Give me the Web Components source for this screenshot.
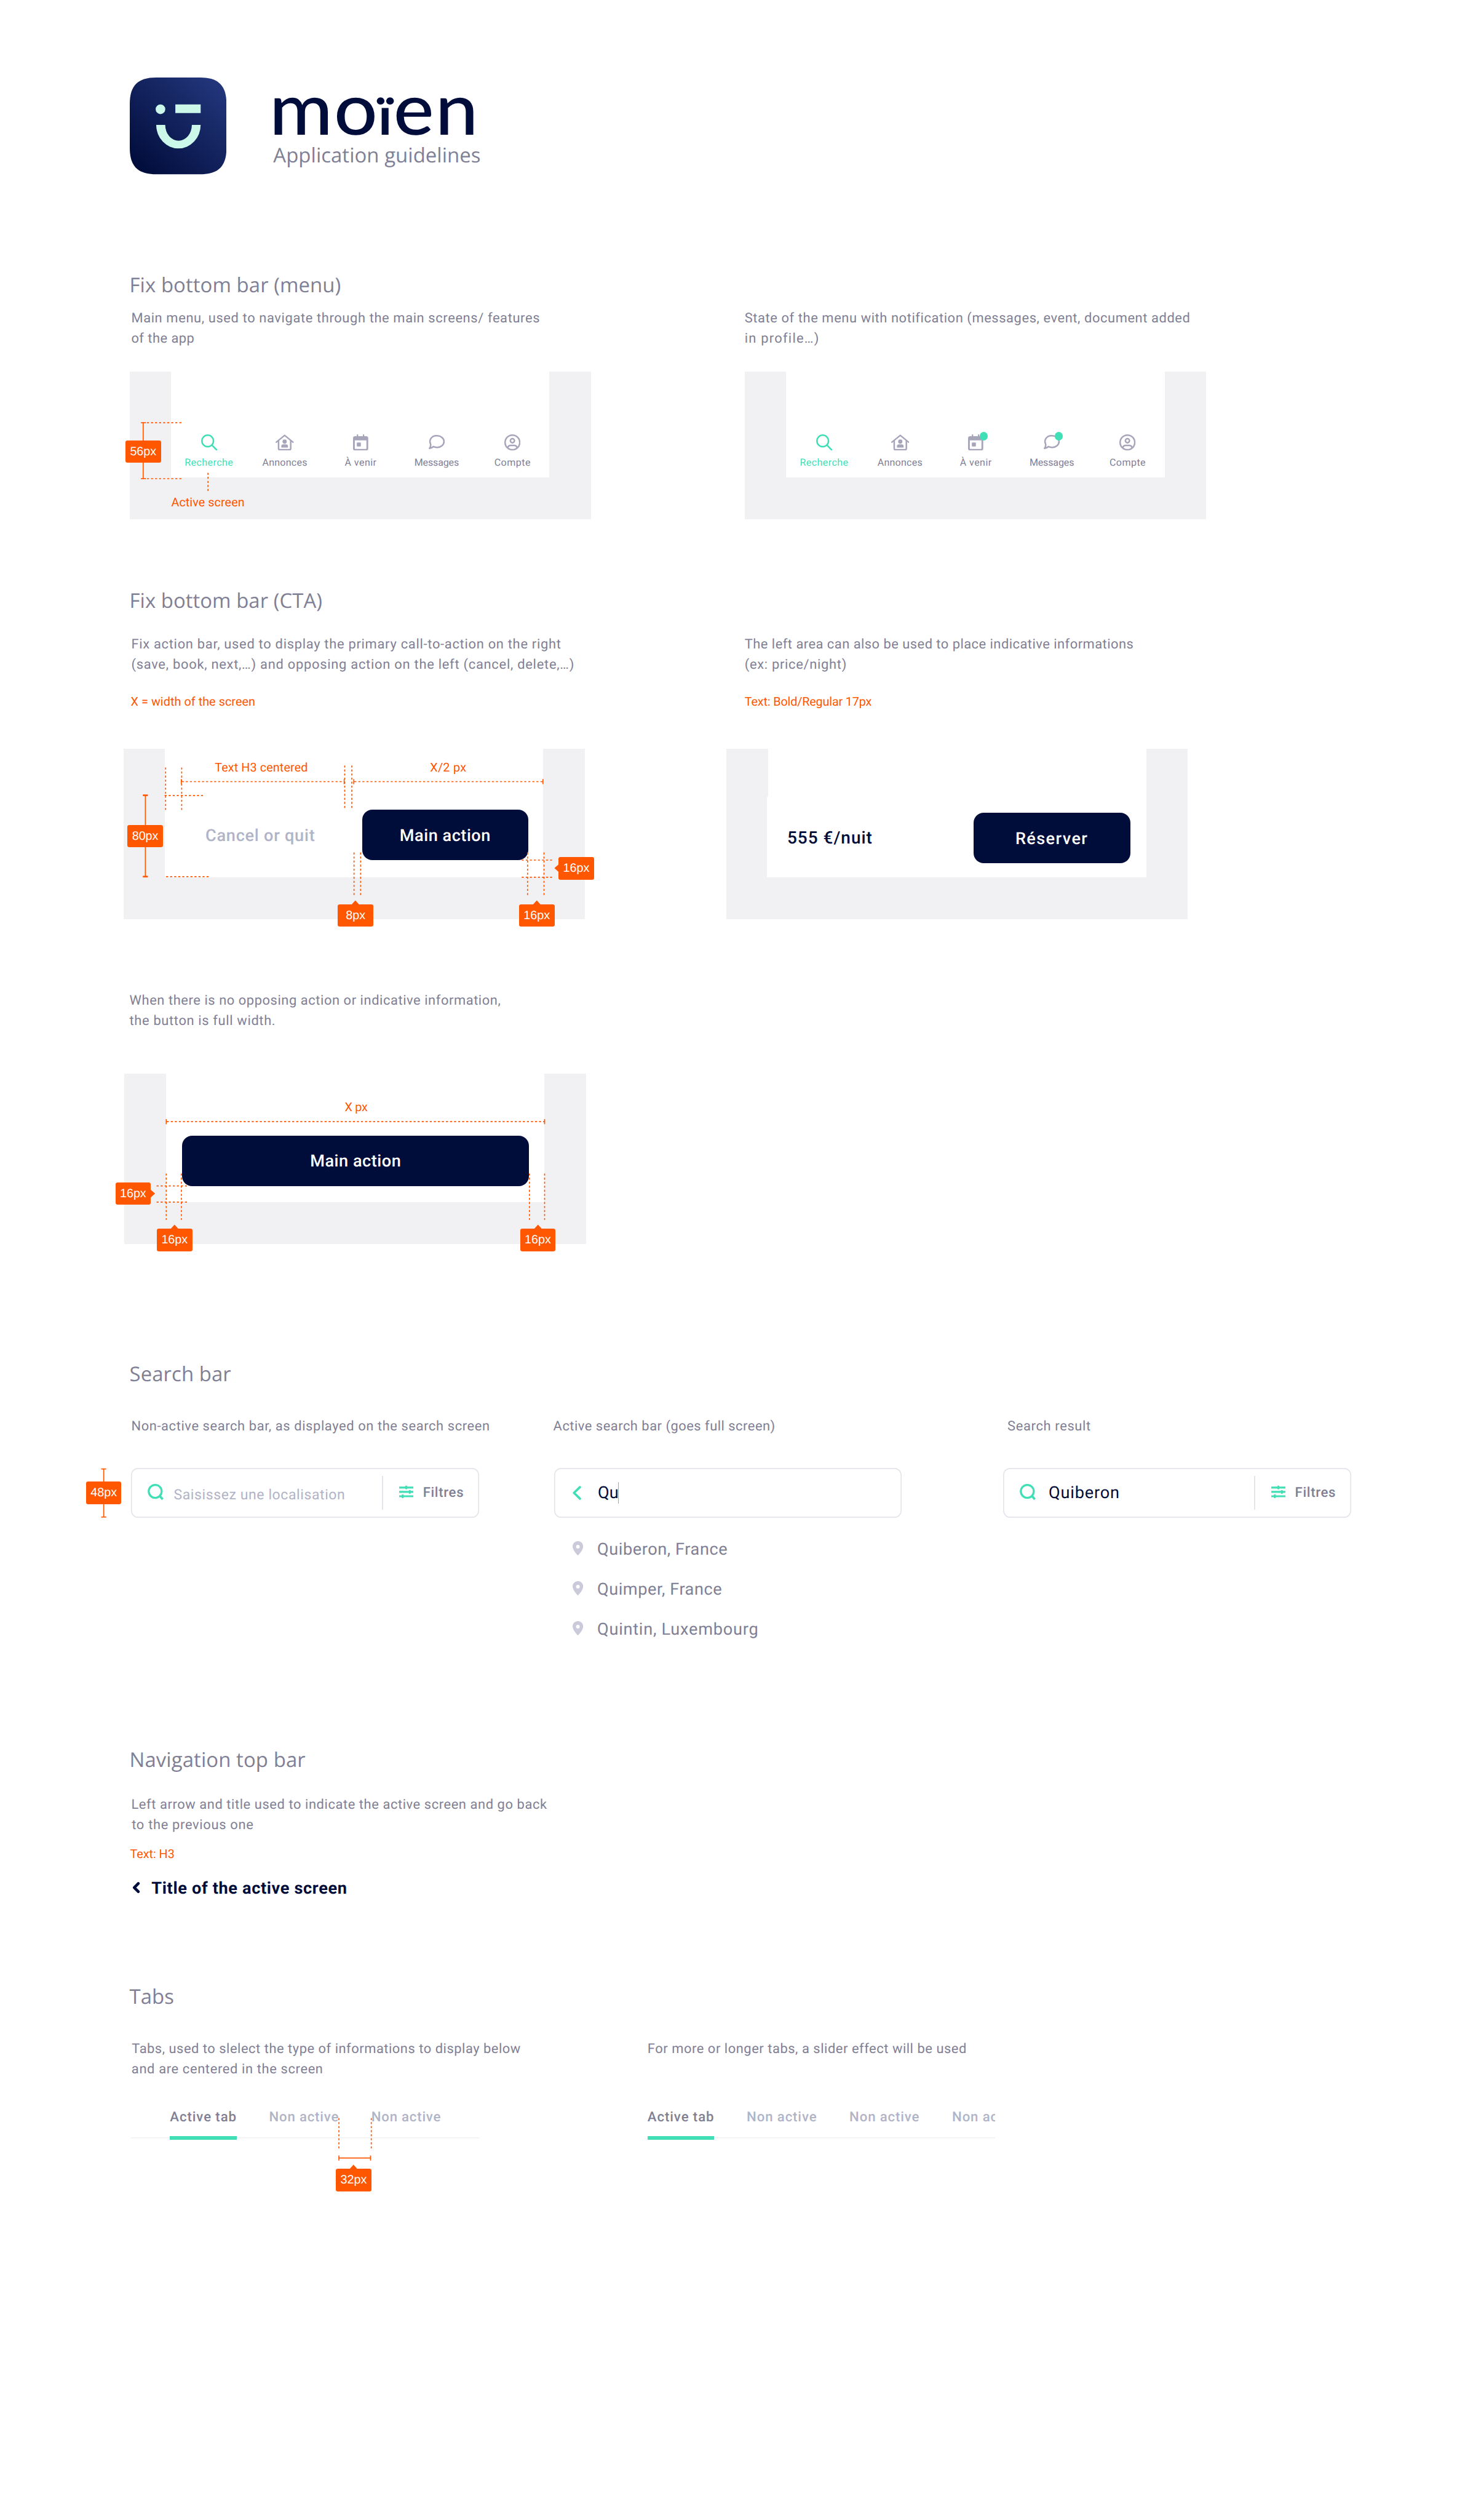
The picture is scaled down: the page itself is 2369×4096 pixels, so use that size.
<!DOCTYPE html>
<html lang="en">
<head>
<meta charset="utf-8">
<title>moïen – Application guidelines</title>
<style>
  /* 1rem = 100 design units */
  html { font-size: 82.257px; background: #fff; }
  body {
    margin: 0; width: 28.8rem; height: 49.79rem; overflow: hidden;
    font-family: Roboto, "Open Sans", sans-serif; color: #808095;
    text-rendering: geometricPrecision;
    --navy: #000c3a; --mint: #40dfb6; --orange: #ff5600; --grey: #808095;
    --pale: #b1b4c7; --panel: #f1f1f4; --line: #e4e4eb; --icon: #a6a5ba;
  }
  main { display: flex; flex-direction: column; align-items: flex-start; padding-left: 2.56rem; }
</style>
</head>
<body>
<main>
  <brand-header></brand-header>

  <guide-section label="Fix bottom bar (menu)" fit="418" style="margin-top:1.935rem">
    <guide-row style="margin-top:.223rem">
      <guide-col style="width:12.16rem">
        <ui-text class="in" w="808" style="margin-left:.035rem">Main menu, used to navigate through the main screens/ features</ui-text>
        <ui-text w="125" style="margin-left:.035rem">of the app</ui-text>
        <phone-frame h="292" screen="210" style="margin-top:.452rem">
          <menu-bar></menu-bar>
          <guide-lines slot="over" set="s26.5 100.5 26.5 211.5;s22 101 32 101;s22 211.5 32 211.5;d34 101 102 101;d34 211.5 102 211.5;d154.6 200 154.6 236"></guide-lines>
          <size-badge slot="over" x="-8" y="136">56px</size-badge>
          <ui-text slot="over" note w="145" style="position:absolute;left:.825rem;top:2.418rem">Active screen</ui-text>
        </phone-frame>
      </guide-col>
      <guide-col>
        <ui-text w="880">State of the menu with notification (messages, event, document added</ui-text>
        <ui-text w="147">in profile…)</ui-text>
        <phone-frame h="292" screen="210" style="margin-top:.452rem">
          <menu-bar notify></menu-bar>
        </phone-frame>
      </guide-col>
    </guide-row>
  </guide-section>

  <guide-section label="Fix bottom bar (CTA)" fit="381" style="margin-top:1.365rem">
    <guide-row style="margin-top:.427rem">
      <guide-col style="width:12.16rem">
        <ui-text w="850" style="margin-left:.035rem">Fix action bar, used to display the primary call-to-action on the right</ui-text>
        <ui-text w="876" style="margin-left:.035rem">(save, book, next,…) and opposing action on the left (cancel, delete,…)</ui-text>
        <ui-text note w="246" style="margin:.367rem 0 0 .025rem">X = width of the screen</ui-text>
        <phone-frame h="336" screen="254" style="margin:.782rem 0 0 -.12rem">
          <cta-bar style="padding:.26rem .3rem 0 .8rem">
            <ui-text w="217" size="33" lh="102" weight="500" style="color:var(--pale)">Cancel or quit</ui-text>
            <cta-button w="328" fit="180">Main action</cta-button>
          </cta-bar>
          <guide-lines slot="over" set="d83 37 83 121;d114.8 37 114.8 121;d437 33 437 117;d451 33 451 117;d115 65 435 65;s114 60 114 70;s436 60 436 70;d456 65 829 65;s455 60 455 70;s829 60 829 70;d81 92.5 158 92.5;d84 252.7 168 252.7;d455.5 205 455.5 289;d468.5 205 468.5 289;d798.5 205 798.5 289;d831 205 831 289;d787 220 848 220;d787 254 848 254;s43 92 43 253;t38 92 48 92;t38 252.7 48 252.7"></guide-lines>
          <size-badge slot="over" x="8" y="150">80px</size-badge>
          <size-badge slot="over" x="424" y="306.5" arrow="up">8px</size-badge>
          <size-badge slot="over" x="782" y="306.5" arrow="up">16px</size-badge>
          <size-badge slot="over" x="860" y="214" arrow="left">16px</size-badge>
          <ui-text slot="over" note w="184" style="position:absolute;left:1.805rem;top:.202rem">Text H3 centered</ui-text>
          <ui-text slot="over" note w="72" style="position:absolute;left:6.06rem;top:.202rem">X/2 px</ui-text>
        </phone-frame>
      </guide-col>
      <guide-col>
        <ui-text w="769">The left area can also be used to place indicative informations</ui-text>
        <ui-text w="202">(ex: price/night)</ui-text>
        <ui-text note w="251" style="margin-top:.367rem">Text: Bold/Regular 17px</ui-text>
        <phone-frame h="336" screen="254" style="margin:.782rem 0 0 -.36rem">
          <cta-bar style="padding:.32rem .32rem 0 .4rem;margin-left:-.02rem">
            <ui-text w="169" size="34" lh="97" weight="500" style="color:var(--navy)">555 €/nuit</ui-text>
            <cta-button w="310" fit="144">Réserver</cta-button>
          </cta-bar>
        </phone-frame>
      </guide-col>
    </guide-row>

    <guide-col style="margin-top:1.411rem">
      <ui-text w="734">When there is no opposing action or indicative information,</ui-text>
      <ui-text w="289">the button is full width.</ui-text>
      <phone-frame h="336" screen="254" style="margin:.849rem 0 0 -.1rem">
        <cta-bar style="padding:.28rem .3rem 0 .32rem">
          <cta-button w="686" fit="180" lh="98">Main action</cta-button>
        </cta-bar>
        <guide-lines slot="over" set="d84 95 831 95;s83 90 83 100;s831 90 831 100;d83 197.6 83 289;d113 197.6 113 289;d801 197.6 801 289;d831 197.6 831 289;d64 222 126 222;d64 254 126 254"></guide-lines>
        <size-badge slot="over" x="-18" y="214" arrow="right">16px</size-badge>
        <size-badge slot="over" x="64" y="306.3" arrow="up">16px</size-badge>
        <size-badge slot="over" x="782" y="306.3" arrow="up">16px</size-badge>
        <ui-text slot="over" note w="45" style="position:absolute;left:4.355rem;top:.495rem">X px</ui-text>
      </phone-frame>
    </guide-col>
  </guide-section>

  <guide-section label="Search bar" fit="201" style="margin-top:2.325rem">
    <guide-row style="margin-top:.602rem">
      <guide-col style="width:8.36rem">
        <ui-text w="709" style="margin-left:.035rem">Non-active search bar, as displayed on the search screen</ui-text>
        <search-field icon="lens" filters style="margin:.623rem 0 0 .03rem">
          <ui-text w="339" size="28" lh="92" style="color:var(--pale);margin:.04rem 0 0 .195rem">Saisissez une localisation</ui-text>
          <guide-lines slot="over" set="s-54 1 -54 97;s-59 2 -49 2;s-59 97 -49 97"></guide-lines>
          <size-badge slot="over" x="-89" y="27">48px</size-badge>
        </search-field>
      </guide-col>
      <guide-col style="width:8.98rem">
        <ui-text w="439" style="margin-left:.017rem">Active search bar (goes full screen)</ui-text>
        <search-field icon="back" style="margin:.623rem 0 0 .028rem">
          <ui-text w="41" size="33" lh="92" style="color:var(--navy);margin:.005rem 0 0 .325rem">Qu</ui-text>
          <text-caret></text-caret>
        </search-field>
        <place-list style="margin:.222rem 0 0 .4rem">
          <place-item fit="258">Quiberon, France</place-item>
          <place-item fit="247">Quimper, France</place-item>
          <place-item fit="319">Quintin, Luxembourg</place-item>
        </place-list>
      </guide-col>
      <guide-col>
        <ui-text w="165" style="margin-left:.015rem">Search result</ui-text>
        <search-field icon="lens" filters style="margin:.623rem 0 0 -.072rem">
          <ui-text w="141" size="33" lh="92" style="color:var(--navy);margin:.005rem 0 0 .25rem">Quiberon</ui-text>
        </search-field>
      </guide-col>
    </guide-row>
  </guide-section>

  <guide-section label="Navigation top bar" fit="348" style="margin-top:1.94rem">
    <guide-col style="margin-top:.466rem">
      <ui-text w="822" style="margin-left:.035rem">Left arrow and title used to indicate the active screen and go back</ui-text>
      <ui-text w="241" style="margin-left:.045rem">to the previous one</ui-text>
      <ui-text note w="88" style="margin:.207rem 0 0 .01rem">Text: H3</ui-text>
      <nav-title style="margin:.309rem 0 0 .06rem"><ui-text w="387" size="33" weight="700">Title of the active screen</ui-text></nav-title>
    </guide-col>
  </guide-section>

  <guide-section label="Tabs" fit="88" style="margin-top:1.701rem">
    <guide-row style="margin-top:.603rem">
      <guide-col style="width:10.24rem">
        <ui-text w="769" style="margin-left:.045rem">Tabs, used to slelect the type of informations to display below</ui-text>
        <ui-text w="379" style="margin-left:.04rem">and are centered in the screen</ui-text>
        <tab-strip style="margin:.58rem 0 0 .03rem;padding-left:.77rem;width:6.11rem">
          <tab-item active w="132">Active tab</tab-item>
          <tab-item w="138">Non active</tab-item>
          <tab-item w="138">Non active</tab-item>
          <guide-lines slot="over" set="d411 19 411 80;d475 19 475 80;s410 98 474 98;s411 93 411 103;s473.5 93 473.5 103"></guide-lines>
          <size-badge slot="over" x="405" y="119.2" arrow="up">32px</size-badge>
        </tab-strip>
      </guide-col>
      <guide-col>
        <ui-text w="631">For more or longer tabs, a slider effect will be used</ui-text>
        <tab-strip clip style="margin-top:.98rem;width:6.87rem">
          <tab-item active w="132">Active tab</tab-item>
          <tab-item w="139">Non active</tab-item>
          <tab-item w="139">Non active</tab-item>
          <tab-item w="139">Non active</tab-item>
        </tab-strip>
      </guide-col>
    </guide-row>
  </guide-section>
</main>

<script>
const U = n => `${(n / 100).toFixed(4)}rem`;

const icons = {
  search: [32, 32, '<g fill="none" stroke="currentColor" stroke-width="3.1" stroke-linecap="round"><circle cx="13" cy="13" r="11.4"/><path d="M21.5 21.5 30.4 30.4"/></g>'],
  home: [36, 32, '<g fill="none" stroke="currentColor" stroke-width="3" stroke-linejoin="round" stroke-linecap="round"><path d="M1.6 15.4 18 2 34.4 15.4"/><path d="M6 13V28a2.5 2.5 0 0 0 2.5 2.5h19A2.5 2.5 0 0 0 30 28V13"/></g><g fill="currentColor"><circle cx="18" cy="14.2" r="4.2"/><path d="M11.4 26v-2.200a4 4 0 0 1 4-4h5.200a4 4 0 0 1 4 4V26z"/></g>'],
  calendar: [30, 32, '<g fill="currentColor"><rect x="7.400" width="2.800" height="8" rx="1.200"/><rect x="19.400" width="2.800" height="8" rx="1.200"/><path fill-rule="evenodd" d="M4 3.800H26A4 4 0 0 1 30 7.800V28A4 4 0 0 1 26 32H4A4 4 0 0 1 0 28V7.800A4 4 0 0 1 4 3.800zM3.500 12V27.500a1.500 1.500 0 0 0 1.500 1.500H25a1.500 1.500 0 0 0 1.500-1.500V12z"/><rect x="7.500" y="16" width="8" height="8" rx="1"/></g>'],
  chat: [32, 28, '<path d="M3.600 17.300A12 11.400 0 0 1 16.500 1.600 13.600 11.500 0 0 1 30.300 13 13.600 11.500 0 0 1 16.500 24.500Q12.700 24.600 9.200 23 5.500 26.200 1.600 26.400 4.800 22.600 3.600 17.300z" fill="none" stroke="currentColor" stroke-width="3.100" stroke-linejoin="round"/>'],
  user: [32, 32, '<g fill="none" stroke="currentColor" stroke-width="3"><circle cx="16" cy="16" r="14.500"/><circle cx="16" cy="12.600" r="4"/><path d="M6.600 26.600C7.300 23.300 9.600 21.800 12.500 21.800H19.500C22.400 21.800 24.700 23.300 25.400 26.600"/></g>'],
  lens: [32, 32, '<g fill="none" stroke="currentColor" stroke-width="4"><circle cx="15" cy="14.700" r="12.800"/><path d="M24 23.800 30 30.400" stroke-width="4.600"/></g>'],
  back: [17, 28, '<path d="M14.500 2.600 2.800 14 14.500 25.400" fill="none" stroke="currentColor" stroke-width="4.600" stroke-linecap="round" stroke-linejoin="round"/>'],
  prev: [16, 22, '<path d="M12 3 4 11 12 19" fill="none" stroke="currentColor" stroke-width="5.600" stroke-linecap="round" stroke-linejoin="round"/>'],
  sliders: [28, 26, '<g fill="currentColor"><path d="M0 2.800H28V6.600H0zM0 11.400H28V15.200H0zM0 20H28V23.800H0z"/><rect x="12" y="1" width="4" height="7.200" rx="1.500"/><rect x="19" y="9.700" width="4" height="7.200" rx="1.500"/><rect x="5" y="18.300" width="4" height="7.200" rx="1.500"/></g>'],
  pin: [21, 28, '<path fill="currentColor" fill-rule="evenodd" d="M10.500 0C4.700 0 0 4.600 0 10.400 0 17.500 9 27 9.800 27.800q.7.500 1.400 0C12 27 21 17.500 21 10.400 21 4.600 16.300 0 10.500 0zM10.500 7.400a3.600 3.600 0 1 1 0 7.200 3.600 3.600 0 0 1 0-7.200z"/>'],
};
const icon = name => {
  const [w, h, body] = icons[name];
  return `<svg viewBox="0 0 ${w} ${h}" style="display:block;flex:none;width:${U(w)};height:${U(h)}" aria-hidden="true">${body}</svg>`;
};

class Base extends HTMLElement {
  connectedCallback() {
    if (!this.shadowRoot) {
      this.attachShadow({ mode: 'open' }).innerHTML = this.render();
      this.ready?.();
    }
  }
  num(name, fallback) { return Number(this.getAttribute(name) ?? fallback); }
}
const define = (name, render, ready) => customElements.define(name, class extends Base {
  render() { return render(this); }
  ready() { ready?.(this); }
});

/* One line of text, tracked out or in to a set width. */
define('ui-text', el => {
  const note = el.hasAttribute('note');
  return `<style>
    :host { display:block; white-space:nowrap; font-size:${U(el.num('size', note ? 24 : 26.6))};
      line-height:${U(el.num('lh', note ? 32 : 40))}; font-weight:${el.getAttribute('weight') || 400};
      ${note ? 'color:var(--orange);' : ''} }
    span { display:inline-block; ${el.num('size', 26) < 40 ? 'transform:translateY(.012rem);' : ''} }
  </style><span><slot></slot></span>`;
}, el => {
  const span = el.shadowRoot.querySelector('span');
  const target = el.num('w', 0) / 100 * parseFloat(getComputedStyle(document.documentElement).fontSize);
  const gap = (target - span.getBoundingClientRect().width) / el.textContent.length;
  if (target) span.style.letterSpacing = `${gap.toFixed(4)}px`;
});

define('brand-header', () => `<style>
  :host { display:flex; gap:.93rem; margin-top:1.537rem; height:1.913rem; }
  .tile { width:1.912rem; height:1.913rem; flex:none; }
  .name { display:flex; flex-direction:column; align-items:flex-start; }
  .word { font:500 1.42rem/1.5rem Lato, sans-serif; color:var(--navy); white-space:nowrap; height:1.444rem; margin:-.159rem 0 0 -.08rem; transform:scaleX(1.065); transform-origin:0 0; }
  .word span { letter-spacing:.025rem; }
  .word .i { font-size:1.03rem; font-weight:700; letter-spacing:0; margin:0 .025rem 0 -.015rem; }
  .sub { font-family:"Open Sans", sans-serif; }
</style>
<svg class="tile" viewBox="0 0 191 191">
  <defs><linearGradient id="g" x1=".08" y1=".95" x2=".9" y2=".08"><stop offset="0" stop-color="#000c3a"/><stop offset="1" stop-color="#22357a"/></linearGradient></defs>
  <path fill="url(#g)" d="M0 52C0 16 16 0 52 0H139C175 0 191 16 191 52V139C191 175 175 191 139 191H52C16 191 0 175 0 139z"/>
  <g fill="#ccf8ea"><circle cx="60.600" cy="62.600" r="9.500"/><path d="M90 53H140V70H90z"/>
  <path d="M52.200 93.600A43.900 46.400 0 0 0 140 93.600H122.600A26.300 31 0 0 1 70 93.600z"/></g>
</svg>
<div class="name"><div class="word"><span>mo</span><span class="i">ï</span><span>en</span></div>
<ui-text class="sub" w="410" size="40" lh="48">Application guidelines</ui-text></div>`);

define('guide-section', el => `<style>
  :host { display:flex; flex-direction:column; align-items:flex-start; }
  .h { font-family:"Open Sans", sans-serif; }
</style><ui-text class="h" w="${el.getAttribute('fit')}" size="40" lh="48">${el.getAttribute('label')}</ui-text><slot></slot>`);

define('guide-row', () => `<style>:host { display:flex; align-items:flex-start; }</style><slot></slot>`);
define('guide-col', () => `<style>:host { display:flex; flex-direction:column; align-items:flex-start; flex:none; }</style><slot></slot>`);

define('phone-frame', el => `<style>
  :host { display:block; position:relative; box-sizing:border-box; width:9.12rem; height:${U(el.num('h'))}; padding:0 .82rem; background:var(--panel); }
  .screen { height:${U(el.num('screen'))}; background:#fff; display:flex; flex-direction:column; justify-content:flex-end; }
</style><div class="screen"><slot></slot></div><slot name="over"></slot>`);

define('menu-bar', el => {
  const dot = x => el.hasAttribute('notify') ? `<i style="left:calc(50% + ${U(x)})"></i>` : '';
  const item = (name, label, w, extra = '') => `<div class="item ${name}">${extra}<div class="ic">${icon(name)}</div>
    <ui-text w="${w}" size="19.5" lh="28">${label}</ui-text></div>`;
  return `<style>
  :host { display:flex; height:1.1rem; margin-right:-.02rem; }
  .item { flex:1; display:flex; flex-direction:column; align-items:center; position:relative; padding-top:.24rem; }
  .ic { height:.32rem; margin-bottom:.09rem; display:flex; align-items:center; color:var(--icon); }
  .search, .search .ic { color:var(--mint); }
  i { position:absolute; top:.2rem; width:.16rem; height:.16rem; border-radius:50%; background:var(--mint); }
</style>${item('search', 'Recherche', 96)}${item('home', 'Annonces', 89)}${item('calendar', 'À venir', 63, dot(8))}${item('chat', 'Messages', 88, dot(6))}${item('user', 'Compte', 72)}`;
});

define('cta-bar', () => `<style>
  :host { display:flex; box-sizing:border-box; height:1.6rem; background:#fff; justify-content:space-between; align-items:flex-start; }
</style><slot></slot>`);

define('cta-button', el => `<style>
  :host { display:flex; justify-content:center; width:${U(el.num('w'))}; height:1rem; border-radius:.2rem; background:var(--navy); color:#fff; }
</style><ui-text w="${el.getAttribute('fit')}" size="33" lh="${el.num('lh', 102)}" weight="500">${el.textContent}</ui-text>`);

/* Guide lines: s = solid, t = thick, d = dashed, followed by x1 y1 x2 y2. */
define('guide-lines', el => `<style>
  :host { position:absolute; left:0; top:0; pointer-events:none; }
  svg { display:block; width:1rem; height:1rem; overflow:visible; stroke:var(--orange); stroke-width:2; }
  .d { stroke-dasharray:4 4; } .t { stroke-width:3.200; }
</style><svg viewBox="0 0 100 100">${el.getAttribute('set').split(';').map(s => {
  const [a, b, c, d] = s.slice(1).split(' ');
  return `<line class="${s[0]}" x1="${a}" y1="${b}" x2="${c}" y2="${d}"/>`;
}).join('')}</svg>`);

define('size-badge', el => {
  const tip = { up: '27,1 35,-8 43,1', left: '1,14 -8,22 1,30', right: '69,14 78,22 69,30' }[el.getAttribute('arrow')];
  return `<style>
  :host { position:absolute; left:${U(el.num('x'))}; top:${U(el.num('y'))}; width:.7rem; height:.44rem; border-radius:.04rem;
    background:var(--orange); color:#fff; font:.24rem/.445rem "Liberation Sans", Arial, sans-serif; text-align:center; }
  svg { position:absolute; inset:0; width:.7rem; height:.44rem; overflow:visible; fill:var(--orange); }
</style>${tip ? `<svg viewBox="0 0 70 44"><polygon points="${tip}"/></svg>` : ''}<slot></slot>`;
});

define('search-field', el => `<style>
  :host { display:flex; position:relative; box-sizing:border-box; width:6.88rem; height:.98rem; box-shadow:inset 0 0 0 .02rem var(--line); border-radius:.14rem; padding:.02rem .02rem 0 .33rem; align-items:flex-start; }
  .lead { color:var(--mint); margin-top:${el.getAttribute('icon') === 'back' ? '.325rem' : '.29rem'}; ${el.getAttribute('icon') === 'back' ? 'margin-left:.045rem' : ''} }
  .filters { display:flex; margin-left:auto; }
  hr { margin:.14rem .32rem 0 0; border:0; width:.02rem; height:.66rem; background:var(--line); }
  .sl { color:var(--mint); margin:.315rem .185rem 0 0; }
  .filters ui-text { color:var(--grey); margin:.005rem .28rem 0 0; }
</style><div class="lead">${icon(el.getAttribute('icon'))}</div><slot></slot>
${el.hasAttribute('filters') ? `<div class="filters"><hr><div class="sl">${icon('sliders')}</div><ui-text w="81" size="27" lh="92" weight="500">Filtres</ui-text></div>` : ''}<slot name="over"></slot>`);

define('text-caret', () => `<style>:host { display:block; width:.02rem; height:.42rem; margin:.26rem 0 0 -.015rem; background:var(--icon); }</style>`);

define('place-list', () => `<style>:host { display:flex; flex-direction:column; }</style><slot></slot>`);
define('place-item', el => `<style>
  :host { display:flex; align-items:center; gap:.275rem; height:.79rem; }
  .p { color:#cbcada; margin-top:-.03rem; }
</style><div class="p">${icon('pin')}</div><ui-text w="${el.getAttribute('fit')}" size="33" lh="79">${el.textContent}</ui-text>`);

define('nav-title', () => `<style>:host { display:flex; align-items:center; gap:.215rem; color:var(--navy); }</style>${icon('prev')}<slot></slot>`);

define('tab-strip', el => `<style>
  :host { display:flex; position:relative; gap:.64rem; height:.62rem; box-sizing:content-box; ${el.hasAttribute('clip') ? 'overflow:hidden;' : ''}
    background:linear-gradient(#f1f1f3, #f1f1f3) 0 .567rem / 100% .02rem no-repeat; }
</style><slot></slot><slot name="over"></slot>`);
define('tab-item', el => `<style>
  :host { display:block; flex:none; box-sizing:border-box; width:${U(el.num('w'))}; height:.612rem; color:var(--pale); }
  :host([active]) { color:var(--grey); border-bottom:.08rem solid var(--mint); }
</style><ui-text w="${el.getAttribute('w')}" size="27" lh="32" weight="500">${el.textContent}</ui-text>`);
</script>
</body>
</html>
